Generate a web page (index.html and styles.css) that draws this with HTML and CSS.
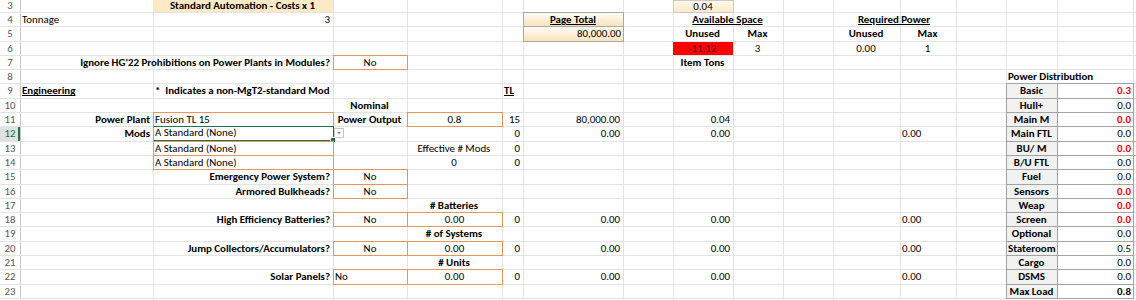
FILE: index.html
```html
<!DOCTYPE html>
<html>
<head>
<meta charset="utf-8">
<link rel="stylesheet" href="styles.css">
</head>
<body>
<div class="sheet">
  <div class="row first">
    <div class="rh">3</div>
    <div class="cB ctr b beige">Standard Automation - Costs x 1</div>
    <div class="cH ctr tot">0.04</div>
  </div>
  <div class="row">
    <div class="rh">4</div>
    <div class="cA">Tonnage</div>
    <div class="cB r">3</div>
    <div class="cF ctr b u pt">Page Total</div>
    <div class="cHI ctr b u">Available Space</div>
    <div class="cKL ctr b u">Required Power</div>
  </div>
  <div class="row">
    <div class="rh">5</div>
    <div class="cF r pt">80,000.00</div>
    <div class="cH ctr b">Unused</div>
    <div class="cI ctr b">Max</div>
    <div class="cK ctr b">Unused</div>
    <div class="cL ctr b">Max</div>
  </div>
  <div class="row">
    <div class="rh">6</div>
    <div class="cH ctr red">-11.12</div>
    <div class="cI ctr">3</div>
    <div class="cK ctr">0.00</div>
    <div class="cL ctr">1</div>
  </div>
  <div class="row">
    <div class="rh">7</div>
    <div class="cAB r b">Ignore HG'22 Prohibitions on Power Plants in Modules?</div>
    <div class="cC ctr box">No</div>
    <div class="cH ctr b">Item Tons</div>
  </div>
  <div class="row">
    <div class="rh">8</div>
    <div class="cN b">Power Distribution</div>
  </div>
  <div class="row">
    <div class="rh">9</div>
    <div class="cA b u">Engineering</div>
    <div class="cB b">*  Indicates a non-MgT2-standard Mod</div>
    <div class="cE b u">TL</div>
    <div class="cN pd pdl">Basic</div>
    <div class="cO pd pdv hot">0.3</div>
  </div>
  <div class="row">
    <div class="rh">10</div>
    <div class="cC ctr b">Nominal</div>
    <div class="cN pd pdl">Hull+</div>
    <div class="cO pd pdv">0.0</div>
  </div>
  <div class="row">
    <div class="rh">11</div>
    <div class="cA r b">Power Plant</div>
    <div class="cB box">Fusion TL 15</div>
    <div class="cC ctr b">Power Output</div>
    <div class="cD ctr box">0.8</div>
    <div class="cE r">15</div>
    <div class="cF r">80,000.00</div>
    <div class="cH r">0.04</div>
    <div class="cN pd pdl">Main M</div>
    <div class="cO pd pdv hot">0.0</div>
  </div>
  <div class="row">
    <div class="rh sel">12</div>
    <div class="cA r b">Mods</div>
    <div class="cB box active">A Standard (None)<span class="dd"></span></div>
    <div class="cE r">0</div>
    <div class="cF r">0.00</div>
    <div class="cH r">0.00</div>
    <div class="cL">0.00</div>
    <div class="cN pd pdl">Main FTL</div>
    <div class="cO pd pdv">0.0</div>
  </div>
  <div class="row">
    <div class="rh">13</div>
    <div class="cB box">A Standard (None)</div>
    <div class="cD ctr">Effective # Mods</div>
    <div class="cE r">0</div>
    <div class="cN pd pdl">BU/ M</div>
    <div class="cO pd pdv hot">0.0</div>
    <div class="cP box"></div>
  </div>
  <div class="row">
    <div class="rh">14</div>
    <div class="cB box">A Standard (None)</div>
    <div class="cD ctr">0</div>
    <div class="cE r">0</div>
    <div class="cN pd pdl">B/U FTL</div>
    <div class="cO pd pdv">0.0</div>
  </div>
  <div class="row">
    <div class="rh">15</div>
    <div class="cB r b">Emergency Power System?</div>
    <div class="cC ctr box">No</div>
    <div class="cN pd pdl">Fuel</div>
    <div class="cO pd pdv">0.0</div>
  </div>
  <div class="row">
    <div class="rh">16</div>
    <div class="cB r b">Armored Bulkheads?</div>
    <div class="cC ctr box">No</div>
    <div class="cN pd pdl">Sensors</div>
    <div class="cO pd pdv hot">0.0</div>
  </div>
  <div class="row">
    <div class="rh">17</div>
    <div class="cD ctr b"># Batteries</div>
    <div class="cN pd pdl">Weap</div>
    <div class="cO pd pdv hot">0.0</div>
  </div>
  <div class="row">
    <div class="rh">18</div>
    <div class="cB r b">High Efficiency Batteries?</div>
    <div class="cC ctr box">No</div>
    <div class="cD ctr box">0.00</div>
    <div class="cE r">0</div>
    <div class="cF r">0.00</div>
    <div class="cH r">0.00</div>
    <div class="cL">0.00</div>
    <div class="cN pd pdl">Screen</div>
    <div class="cO pd pdv hot">0.0</div>
  </div>
  <div class="row">
    <div class="rh">19</div>
    <div class="cD ctr b"># of Systems</div>
    <div class="cN pd pdl">Optional</div>
    <div class="cO pd pdv">0.0</div>
  </div>
  <div class="row">
    <div class="rh">20</div>
    <div class="cB r b">Jump Collectors/Accumulators?</div>
    <div class="cC ctr box">No</div>
    <div class="cD ctr box">0.00</div>
    <div class="cE r">0</div>
    <div class="cF r">0.00</div>
    <div class="cH r">0.00</div>
    <div class="cL">0.00</div>
    <div class="cN pd pdl">Stateroom</div>
    <div class="cO pd pdv">0.5</div>
  </div>
  <div class="row">
    <div class="rh">21</div>
    <div class="cD ctr b"># Units</div>
    <div class="cN pd pdl">Cargo</div>
    <div class="cO pd pdv">0.0</div>
  </div>
  <div class="row">
    <div class="rh">22</div>
    <div class="cB r b">Solar Panels?</div>
    <div class="cC box">No</div>
    <div class="cD ctr box">0.00</div>
    <div class="cE r">0</div>
    <div class="cF r">0.00</div>
    <div class="cH r">0.00</div>
    <div class="cL">0.00</div>
    <div class="cN pd pdl">DSMS</div>
    <div class="cO pd pdv">0.0</div>
  </div>
  <div class="row">
    <div class="rh">23</div>
    <div class="cN pd pdl">Max Load</div>
    <div class="cO pd pdv b">0.8</div>
  </div>
</div>
</body>
</html>
```
FILE: styles.css
```css
html, body {
  margin: 0;
  padding: 0;
  background: #ffffff;
}

.sheet {
  width: 1136px;
  font-family: Carlito, Lato, "Liberation Sans", sans-serif;
  font-size: 10.9px;
  color: #000000;
}

.row {
  display: grid;
  grid-template-columns: 20px 133px 180px 74px 95px 21px 100px 50px 60px 50px 50px 67px 56px 50px 51px 76px 3px;
  grid-template-rows: 1fr;
  height: 14.3px;
  box-sizing: border-box;
  border-bottom: 1px solid #e3e3e3;
  background-image: linear-gradient(to right,
    transparent 0 20px, #c8c8c8 20px 21px,
    transparent 21px 153px, #e3e3e3 153px 154px,
    transparent 154px 333px, #e3e3e3 333px 334px,
    transparent 334px 407px, #e3e3e3 407px 408px,
    transparent 408px 502px, #e3e3e3 502px 503px,
    transparent 503px 523px, #e3e3e3 523px 524px,
    transparent 524px 623px, #e3e3e3 623px 624px,
    transparent 624px 673px, #e3e3e3 673px 674px,
    transparent 674px 733px, #e3e3e3 733px 734px,
    transparent 734px 783px, #e3e3e3 783px 784px,
    transparent 784px 833px, #e3e3e3 833px 834px,
    transparent 834px 900px, #e3e3e3 900px 901px,
    transparent 901px 956px, #e3e3e3 956px 957px,
    transparent 957px 1006px, #e3e3e3 1006px 1007px,
    transparent 1007px 1057px, #e3e3e3 1057px 1058px,
    transparent 1058px 1133px, #e3e3e3 1133px 1134px,
    transparent 1134px);
}

.row.first {
  height: 13px;
}

.row > div {
  position: relative;
  min-width: 0;
  white-space: pre;
  line-height: 13.3px;
  padding: 0 3px 0 2px;
}

.row.first > div {
  line-height: 12px;
}

/* row header */
.rh {
  grid-column: 1;
  text-align: center;
  color: #565656;
  font-size: 10.8px;
}

.row > .rh {
  padding: 0;
}

.rh.sel {
  background: #e1e1e1;
  color: #1d6b41;
  box-shadow: inset -2px 0 0 #217346;
}

/* columns */
.cA { grid-column: 2; }
.cB { grid-column: 3; }
.cC { grid-column: 4; }
.cD { grid-column: 5; }
.cE { grid-column: 6; }
.cF { grid-column: 7; }
.cG { grid-column: 8; }
.cH { grid-column: 9; }
.cI { grid-column: 10; }
.cJ { grid-column: 11; }
.cK { grid-column: 12; }
.cL { grid-column: 13; }
.cM { grid-column: 14; }
.cN { grid-column: 15; }
.cO { grid-column: 16; }
.cP { grid-column: 17; }
.cAB { grid-column: 2 / 4; }
.cHI { grid-column: 9 / 11; }
.cKL { grid-column: 12 / 14; }

/* text formats */
.r { text-align: right; }
.ctr { text-align: center; }
.b { font-weight: 700; }
.u { text-decoration: underline; text-underline-offset: 1px; }

/* fills & boxes */
.beige {
  background: #fde9c6;
}

.row > .box,
.row > .pt,
.row > .tot,
.row > .pd {
  border: 1px solid #e9955c;
  margin: -1px -1px -1px 0;
  padding: 0 2px 0 1px;
}

.row > .pt {
  border-color: #a9a9a9;
  background: linear-gradient(#fffcf5, #fbe3bd);
}

.row > .tot {
  border-color: #c9c9c9;
  background: linear-gradient(#fff8ea, #fce9c9);
}

.row.first > .tot {
  margin-top: 0;
  line-height: 11px;
}

.red {
  background: #ff0000;
  color: #5c0000;
}

/* active (selected) cell */
.row > .active {
  border-top-color: #217346;
  border-right-color: #217346;
  border-bottom: 2px solid #217346;
  line-height: 12.3px;
}

.active::after {
  content: "";
  position: absolute;
  right: -3px;
  bottom: -3px;
  width: 4px;
  height: 4px;
  background: #217346;
  border: 1px solid #ffffff;
}

.dd {
  position: absolute;
  left: 100%;
  top: 1px;
  margin-left: 1px;
  width: 10px;
  height: 10px;
  box-sizing: border-box;
  border: 1px solid #c8c8c8;
  background: #ffffff;
}

.dd::before {
  content: "";
  position: absolute;
  left: 2px;
  top: 3px;
  border-left: 2px solid transparent;
  border-right: 2px solid transparent;
  border-top: 2px solid #7a7a7a;
}

/* power distribution table */
.row > .pd {
  border-color: #a3a3a3;
}

.pdl {
  background: #f2f2f2;
  text-align: center;
  font-weight: 700;
}

.row > .pdv {
  background: #ffffff;
  text-align: right;
  padding-right: 2px;
}

.hot {
  color: #ff0000;
  font-weight: 700;
}
```
